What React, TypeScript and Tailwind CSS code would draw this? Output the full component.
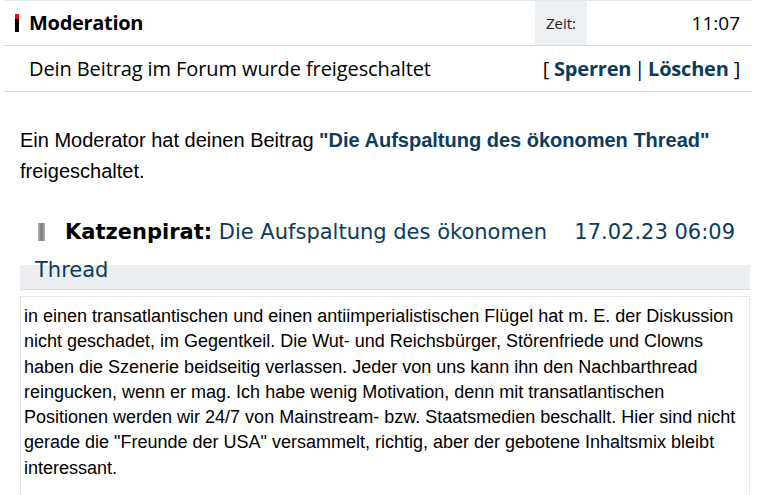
import React from 'react';

const post =
  'in einen transatlantischen und einen antiimperialistischen Flügel hat m. E. der Diskussion nicht geschadet, im Gegentkeil. Die Wut- und Reichsbürger, Störenfriede und Clowns haben die Szenerie beidseitig verlassen. Jeder von uns kann ihn den Nachbarthread reingucken, wenn er mag. Ich habe wenig Motivation, denn mit transatlantischen Positionen werden wir 24/7 von Mainstream- bzw. Staatsmedien beschallt. Hier sind nicht gerade die "Freunde der USA" versammelt, richtig, aber der gebotene Inhaltsmix bleibt interessant.';

export default function App() {
  return (
    <div className="w-[763px] h-[495px] overflow-hidden bg-white">
      {/* notification header */}
      <div className="ml-1 w-[748px] font-['Open_Sans',sans-serif] text-black border-t border-[#e3e8ec]">
        <div className="flex h-[45px] items-stretch border-b border-[#d3dbe1]">
          <div className="flex flex-1 items-center pl-[11px]">
            <span className="flex h-[18px] w-[4px] flex-col">
              <span className="h-[5px] bg-[#e30613]" />
              <span className="flex-1 bg-black" />
            </span>
            <span className="ml-[10px] text-[20px] font-bold tracking-[-0.3px]">Moderation</span>
          </div>
          <div className="flex w-[52px] items-center justify-center bg-[#edf0f2] text-[15px] text-[#222]">
            Zeit:
          </div>
          <div className="flex w-[165px] items-center justify-end pr-[12px] text-[19px]">11:07</div>
        </div>
        <div className="flex h-[46px] items-center justify-between border-b border-[#d3dbe1] pl-[25px] pr-[12px] text-[20px]">
          <span className="tracking-[-0.1px]">Dein Beitrag im Forum wurde freigeschaltet</span>
          <span className="tracking-[-0.2px]">
            [ <a className="font-bold text-[#0b3c5d]">Sperren</a>
            <span className="mx-[3px]">|</span>
            <a className="font-bold text-[#0b3c5d]">Löschen</a> ]
          </span>
        </div>
      </div>

      {/* message */}
      <p className="mt-[33px] pl-5 pr-4 font-['Liberation_Sans',Arial,sans-serif] text-[20px] leading-[31px] text-black">
        Ein Moderator hat deinen Beitrag{' '}
        <a className="font-bold text-[#0b3c5d]">"Die Aufspaltung des ökonomen Thread"</a> freigeschaltet.
      </p>

      {/* quoted post */}
      <div className="mt-[26px] ml-5 w-[730px]">
        <div className="border-b border-[#d3dbe1] bg-[linear-gradient(to_bottom,#ffffff_0px,#ffffff_52px,#eceff2_52px)] px-[15px] font-['DejaVu_Sans',sans-serif] text-[21px] leading-[38px] text-[#0b3c5d]">
          <span className="float-right">17.02.23 06:09</span>
          <span className="mr-[20px] ml-[3px] inline-block h-[18px] w-[7px] align-[-2px] bg-[linear-gradient(to_right,#b5b5b5,#7a7a7a,#b5b5b5)]" />
          <b className="text-black">Katzenpirat:</b> Die Aufspaltung des ökonomen Thread
        </div>
        <div className="mt-[6px] h-[300px] border border-[#e2e4f2] px-[3px] pt-[7px] font-['Liberation_Sans',Arial,sans-serif] text-[18px] leading-[25.3px] text-black">
          {post}
        </div>
      </div>
    </div>
  );
}
